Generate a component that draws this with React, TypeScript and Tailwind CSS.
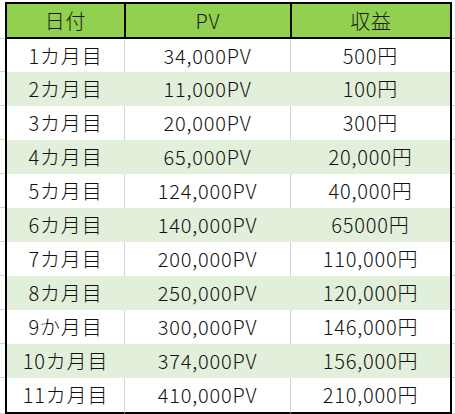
import React from "react";

const rows: [string, string, string][] = [
  ["1カ月目", "34,000PV", "500円"],
  ["2カ月目", "11,000PV", "100円"],
  ["3カ月目", "20,000PV", "300円"],
  ["4カ月目", "65,000PV", "20,000円"],
  ["5カ月目", "124,000PV", "40,000円"],
  ["6カ月目", "140,000PV", "65000円"],
  ["7カ月目", "200,000PV", "110,000円"],
  ["8カ月目", "250,000PV", "120,000円"],
  ["9か月目", "300,000PV", "146,000円"],
  ["10カ月目", "374,000PV", "156,000円"],
  ["11カ月目", "410,000PV", "210,000円"],
];

export default function App() {
  return (
    <div
      className="w-[455px] h-[414px] bg-white flex flex-col overflow-hidden text-[20px] leading-none font-light tracking-[0.8px] text-[#111]"
      style={{ fontFamily: '"Noto Sans CJK JP", "Noto Sans", sans-serif' }}
    >
      <div className="h-[2px] shrink-0" />
      {/* header */}
      <div className="flex h-[37px] shrink-0">
        <div className="w-[5px] border-b border-[#d4d4d4]" />
        <div className="w-[121px] bg-[#92d050] border-l-2 border-r-2 border-t-2 border-b-2 border-black flex items-center justify-center text-[#1a1a1a]">
          日付
        </div>
        <div className="w-[166px] bg-[#92d050] border-r-2 border-t-2 border-b-2 border-black flex items-center justify-center text-[#1a1a1a]">
          PV
        </div>
        <div className="w-[160px] bg-[#92d050] border-r-2 border-t-2 border-b-2 border-black flex items-center justify-center text-[#1a1a1a]">
          収益
        </div>
        <div className="w-[3px] border-b border-[#d4d4d4]" />
      </div>
      {rows.map((r, i) => {
        const green = i % 2 === 1;
        const last = i === rows.length - 1;
        const h = i === 0 ? "h-[33px]" : last ? "h-[36px]" : "h-[34px]";
        const bg = green ? "bg-[#e2efda]" : "bg-white";
        const div = green ? "border-r-transparent" : "border-r-[#d4d4d4]";
        const bot = last ? "border-b-2 border-b-black" : "";
        return (
          <div key={i} className={`flex shrink-0 ${h}`}>
            <div className="w-[5px] border-b border-[#d4d4d4]" />
            <div
              className={`w-[120px] ${bg} border-l-2 border-l-black border-r ${div} ${bot} flex items-center justify-center`}
            >
              {r[0]}
            </div>
            <div
              className={`w-[166px] ${bg} border-r ${div} ${bot} flex items-center justify-center`}
            >
              {r[1]}
            </div>
            <div
              className={`w-[161px] ${bg} border-r-2 border-r-black ${bot} flex items-center justify-center`}
            >
              {r[2]}
            </div>
            <div className="w-[3px] border-b border-[#d4d4d4]" />
          </div>
        );
      })}
    </div>
  );
}
